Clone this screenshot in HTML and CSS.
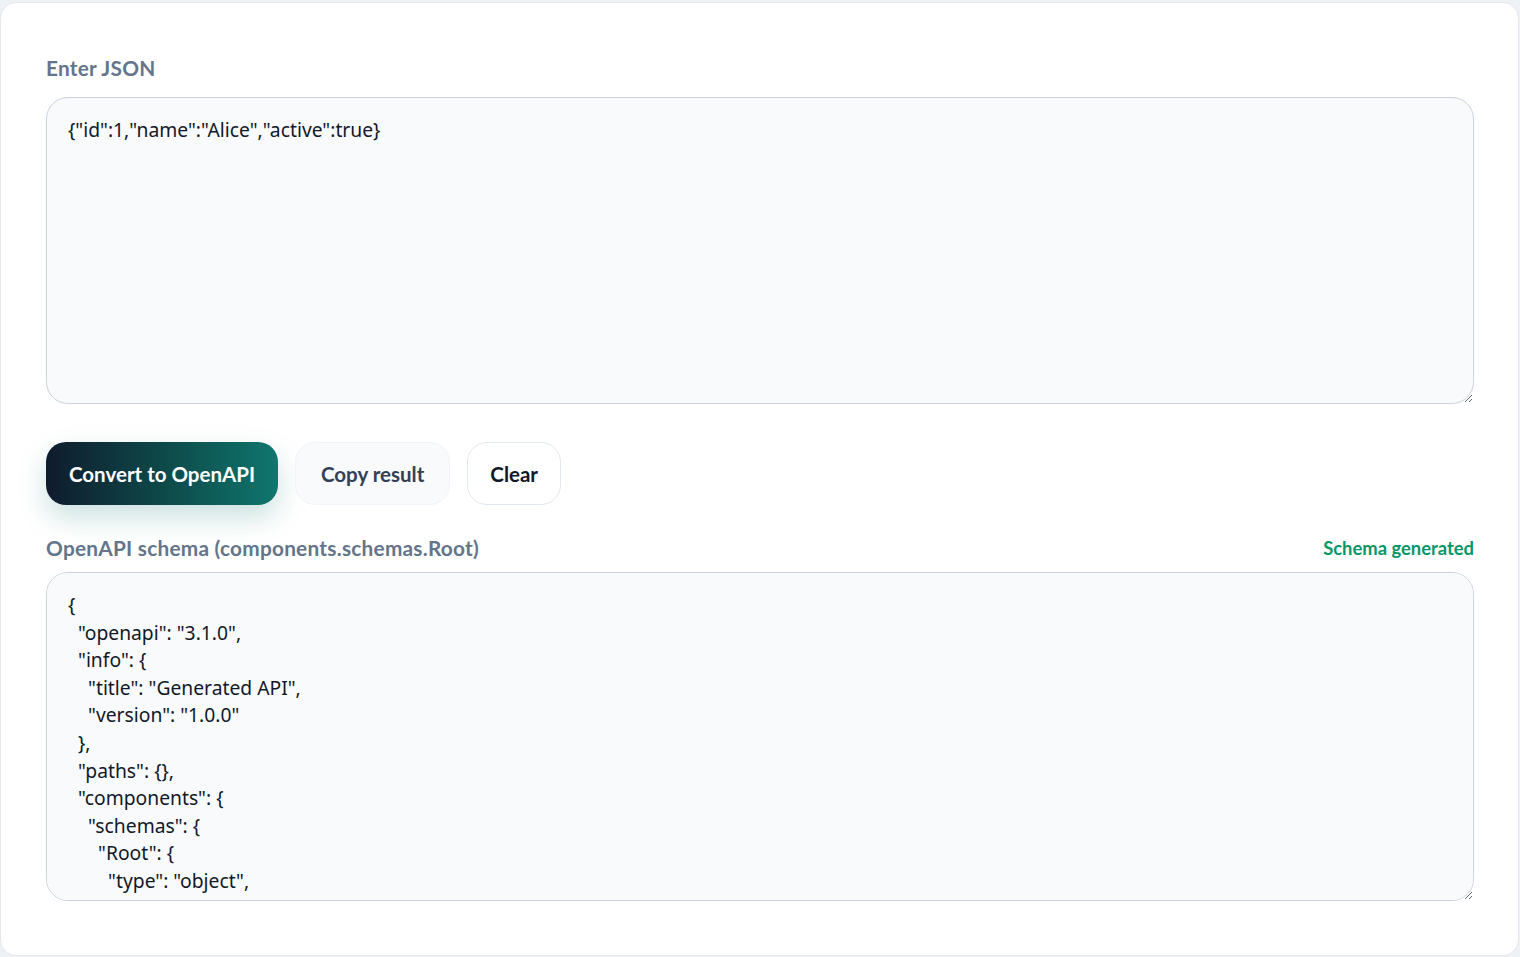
FILE: index.html
```html
<!DOCTYPE html>
<html lang="en">
<head>
    <meta charset="UTF-8">
    <meta name="viewport" content="width=device-width, initial-scale=1.0">
    <title>JSON to OpenAPI</title>
    <link rel="stylesheet" href="styles.css">
</head>
<body>
    <div class="card">
        <label class="field-label" for="input">Enter JSON</label>
        <textarea id="input" class="editor editor-input" spellcheck="false">{"id":1,"name":"Alice","active":true}</textarea>

        <div class="actions">
            <button class="btn btn-primary">Convert to OpenAPI</button>
            <button class="btn btn-soft">Copy result</button>
            <button class="btn btn-outline">Clear</button>
        </div>

        <div class="output-head">
            <label class="field-label" for="output">OpenAPI schema (components.schemas.Root)</label>
            <span class="status">Schema generated</span>
        </div>
        <textarea id="output" class="editor editor-output" spellcheck="false" readonly>{
  "openapi": "3.1.0",
  "info": {
    "title": "Generated API",
    "version": "1.0.0"
  },
  "paths": {},
  "components": {
    "schemas": {
      "Root": {
        "type": "object",
        "properties": {
          "id": {
            "type": "integer"
          },
          "name": {
            "type": "string"
          },
          "active": {
            "type": "boolean"
          }
        },
        "required": [
          "id",
          "name",
          "active"
        ]
      }
    }
  }
}</textarea>
    </div>
</body>
</html>
```

FILE: styles.css
```css
* {
    margin: 0;
    padding: 0;
    box-sizing: border-box;
}

html, body {
    height: 100%;
}

body {
    background: #eef2f7;
    font-family: Lato, "Noto Sans", sans-serif;
    overflow: hidden;
}

.card {
    margin: 2px 1px 0 0;
    height: 954px;
    background: #ffffff;
    border: 1px solid #e5e7eb;
    border-radius: 16px;
    padding: 52px 44px 0 45px;
    display: flex;
    flex-direction: column;
}

.field-label {
    display: block;
    font-size: 20.8px;
    line-height: 25px;
    font-weight: 700;
    letter-spacing: 0.25px;
    color: #64748b;
}

.editor {
    display: block;
    width: 100%;
    margin-top: 17px;
    padding: 18px 21px;
    border: 1.5px solid #cbd2dc;
    border-radius: 22px;
    background: #f8fafc;
    color: #111827;
    font-family: "Noto Sans", sans-serif;
    font-size: 19.3px;
    line-height: 27.6px;
    resize: vertical;
    outline: none;
    scrollbar-width: none;
}

.editor-input {
    height: 307px;
}

.editor-output {
    height: 329px;
    margin-top: 12px;
}

.actions {
    display: flex;
    gap: 17px;
    margin-top: 38px;
}

.btn {
    height: 63px;
    padding: 0 23px;
    border-radius: 20px;
    font-family: inherit;
    font-size: 20.5px;
    font-weight: 700;
    cursor: pointer;
}

.btn-primary {
    color: #ffffff;
    border: none;
    background: linear-gradient(90deg, #0f1b2d 0%, #0e4d4c 55%, #0f766e 100%);
    box-shadow: 0 12px 28px rgba(15, 118, 110, 0.22);
}

.btn-soft {
    color: #334155;
    background: #f8fafc;
    border: 1px solid #f1f4f8;
    padding: 0 25px;
}

.btn-outline {
    color: #111827;
    background: #ffffff;
    border: 1px solid #e2e8f0;
    padding: 0 22px;
}

.output-head {
    display: flex;
    justify-content: space-between;
    align-items: center;
    margin-top: 30px;
}

.status {
    font-size: 18.4px;
    font-weight: 700;
    color: #059669;
}
```
